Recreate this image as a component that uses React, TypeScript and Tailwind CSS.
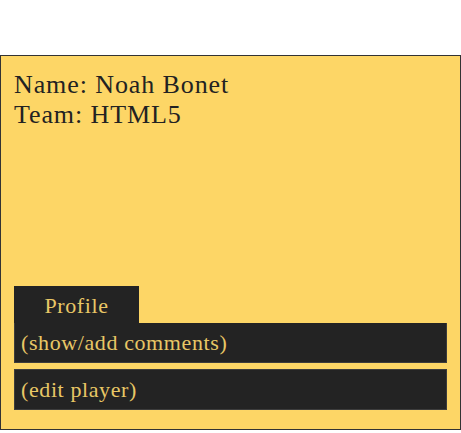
export default function App() {
  return (
    <div className="w-[461px] h-[433px] bg-white pt-[55px] font-['Liberation_Serif',serif]">
      <div className="h-[375px] border border-[#333] bg-[#fdd666] flex flex-col px-[13px] pt-[14px] pb-[19px]">
        {/* player info */}
        <div className="text-[26px] leading-[30px] tracking-[0.9px] text-[#222]">
          <div>Name: Noah Bonet</div>
          <div>Team: HTML5</div>
        </div>

        {/* actions */}
        <div className="mt-auto flex flex-col text-[22px] tracking-[0.6px] text-[#e8c766]">
          <div className="w-[125px] h-[37px] bg-[#232323] flex items-center justify-center pt-[2px]">
            Profile
          </div>
          <div className="h-[40px] bg-[#232323] border border-[#3c3c3c] border-t-0 flex items-center px-[6px]">
            (show/add comments)
          </div>
          <div className="mt-[6px] h-[41px] bg-[#232323] border border-[#3c3c3c] flex items-center px-[6px]">
            (edit player)
          </div>
        </div>
      </div>
    </div>
  );
}
